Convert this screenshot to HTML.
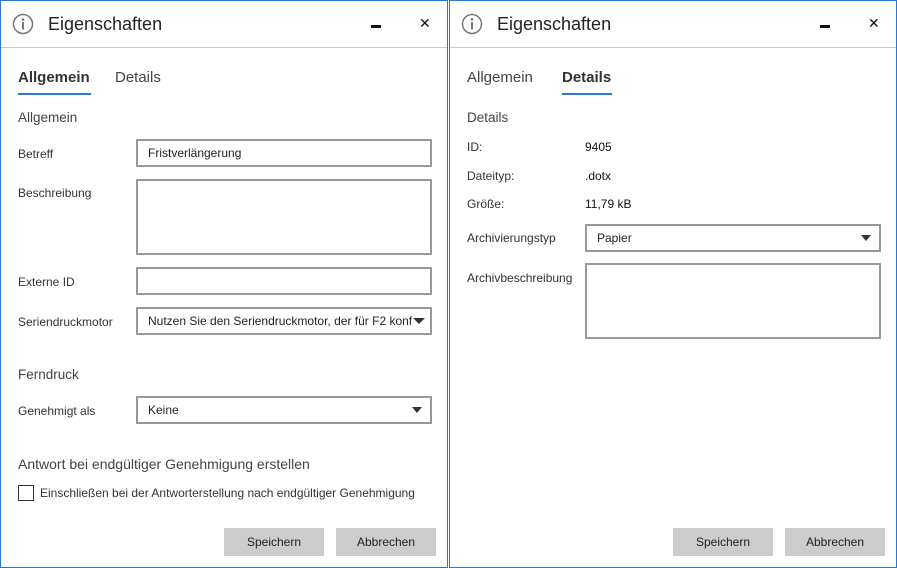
<!DOCTYPE html>
<html><head><meta charset="utf-8"><style>
*{box-sizing:border-box;margin:0;padding:0}
body{width:897px;height:568px;background:#fff;position:relative;overflow:hidden;font-family:"Liberation Sans",sans-serif;color:#333}
.win{position:absolute;top:0;height:568px;box-shadow:inset 0 0 0 1px #2b79d0;background:#fff}
.a{position:absolute;white-space:nowrap}
.title{font-size:18px;color:#222}
.hr{position:absolute;left:1px;right:1px;top:47px;height:1px;background:#ccc}
.tab{font-size:15px;color:#444}
.lbl{font-size:12px;color:#333}
.sec{font-size:14px;color:#444}
.box{position:absolute;border:2px solid #999;background:#fff;font-size:12px;color:#222;padding-left:10px;line-height:24px}
.arr{position:absolute;right:5px;top:9px;width:0;height:0;border-left:5px solid transparent;border-right:5px solid transparent;border-top:6px solid #333}
.btn{position:absolute;width:100px;height:28px;background:#ccc;font-size:12px;color:#222;text-align:center;line-height:28px}
.x{font-size:14px;color:#111}
</style></head><body>

<div class="win" style="left:0;width:448px">
 <svg class="a" style="left:12px;top:13px" width="22" height="22" viewBox="0 0 22 22"><circle cx="11" cy="11" r="9.5" fill="none" stroke="#777" stroke-width="1.5"/><circle cx="11" cy="6.5" r="1.3" fill="#777"/><rect x="10" y="9" width="2" height="7.5" fill="#777"/></svg>
 <div class="a title" style="left:48px;top:14px">Eigenschaften</div>
 <div class="a" style="left:371px;top:25px;width:10px;height:3px;background:#111"></div>
 <div class="a x" style="left:419px;top:15px">✕</div>
 <div class="hr"></div>
 <div class="a tab" style="left:18px;top:69px;font-weight:bold;color:#333">Allgemein</div>
 <div class="a" style="left:18px;top:93px;width:73px;height:2px;background:#2b79d0"></div>
 <div class="a tab" style="left:115px;top:69px">Details</div>
 <div class="a sec" style="left:18px;top:110px;font-size:13.5px">Allgemein</div>
 <div class="a lbl" style="left:18px;top:147px">Betreff</div>
 <div class="box" style="left:136px;top:139px;width:296px;height:28px">Fristverlängerung</div>
 <div class="a lbl" style="left:18px;top:186px">Beschreibung</div>
 <div class="box" style="left:136px;top:179px;width:296px;height:76px"></div>
 <div class="a lbl" style="left:18px;top:275px">Externe ID</div>
 <div class="box" style="left:136px;top:267px;width:296px;height:28px"></div>
 <div class="a lbl" style="left:18px;top:315px">Seriendruckmotor</div>
 <div class="box" style="left:136px;top:307px;width:296px;height:28px;padding-left:10px;overflow:hidden">Nutzen Sie den Seriendruckmotor, der für F2 konf<div class="arr" style="background:#fff;border-left-width:6px;border-right-width:6px"></div></div>
 <div class="a sec" style="left:18px;top:367px;font-size:13.5px">Ferndruck</div>
 <div class="a lbl" style="left:18px;top:404px">Genehmigt als</div>
 <div class="box" style="left:136px;top:396px;width:296px;height:28px">Keine<div class="arr" style="right:8px"></div></div>
 <div class="a sec" style="left:18px;top:456px">Antwort bei endgültiger Genehmigung erstellen</div>
 <div class="a" style="left:18px;top:485px;width:16px;height:16px;border:1px solid #333"></div>
 <div class="a lbl" style="left:40px;top:486px">Einschließen bei der Antworterstellung nach endgültiger Genehmigung</div>
 <div class="btn" style="left:224px;top:528px">Speichern</div>
 <div class="btn" style="left:336px;top:528px">Abbrechen</div>
</div>

<div class="win" style="left:449px;width:448px">
 <svg class="a" style="left:12px;top:13px" width="22" height="22" viewBox="0 0 22 22"><circle cx="11" cy="11" r="9.5" fill="none" stroke="#777" stroke-width="1.5"/><circle cx="11" cy="6.5" r="1.3" fill="#777"/><rect x="10" y="9" width="2" height="7.5" fill="#777"/></svg>
 <div class="a title" style="left:48px;top:14px">Eigenschaften</div>
 <div class="a" style="left:371px;top:25px;width:10px;height:3px;background:#111"></div>
 <div class="a x" style="left:419px;top:15px">✕</div>
 <div class="hr"></div>
 <div class="a tab" style="left:18px;top:69px">Allgemein</div>
 <div class="a tab" style="left:113px;top:69px;font-weight:bold;color:#333">Details</div>
 <div class="a" style="left:113px;top:93px;width:50px;height:2px;background:#2b79d0"></div>
 <div class="a sec" style="left:18px;top:110px;font-size:13.5px">Details</div>
 <div class="a lbl" style="left:18px;top:140px">ID:</div>
 <div class="a lbl" style="left:136px;top:140px;color:#111">9405</div>
 <div class="a lbl" style="left:18px;top:169px">Dateityp:</div>
 <div class="a lbl" style="left:136px;top:169px;color:#111">.dotx</div>
 <div class="a lbl" style="left:18px;top:197px">Größe:</div>
 <div class="a lbl" style="left:136px;top:197px;color:#111">11,79 kB</div>
 <div class="a lbl" style="left:18px;top:231px">Archivierungstyp</div>
 <div class="box" style="left:136px;top:224px;width:296px;height:28px">Papier<div class="arr" style="right:8px"></div></div>
 <div class="a lbl" style="left:18px;top:271px">Archivbeschreibung</div>
 <div class="box" style="left:136px;top:263px;width:296px;height:76px"></div>
 <div class="btn" style="left:224px;top:528px">Speichern</div>
 <div class="btn" style="left:336px;top:528px">Abbrechen</div>
</div>
</body></html>
